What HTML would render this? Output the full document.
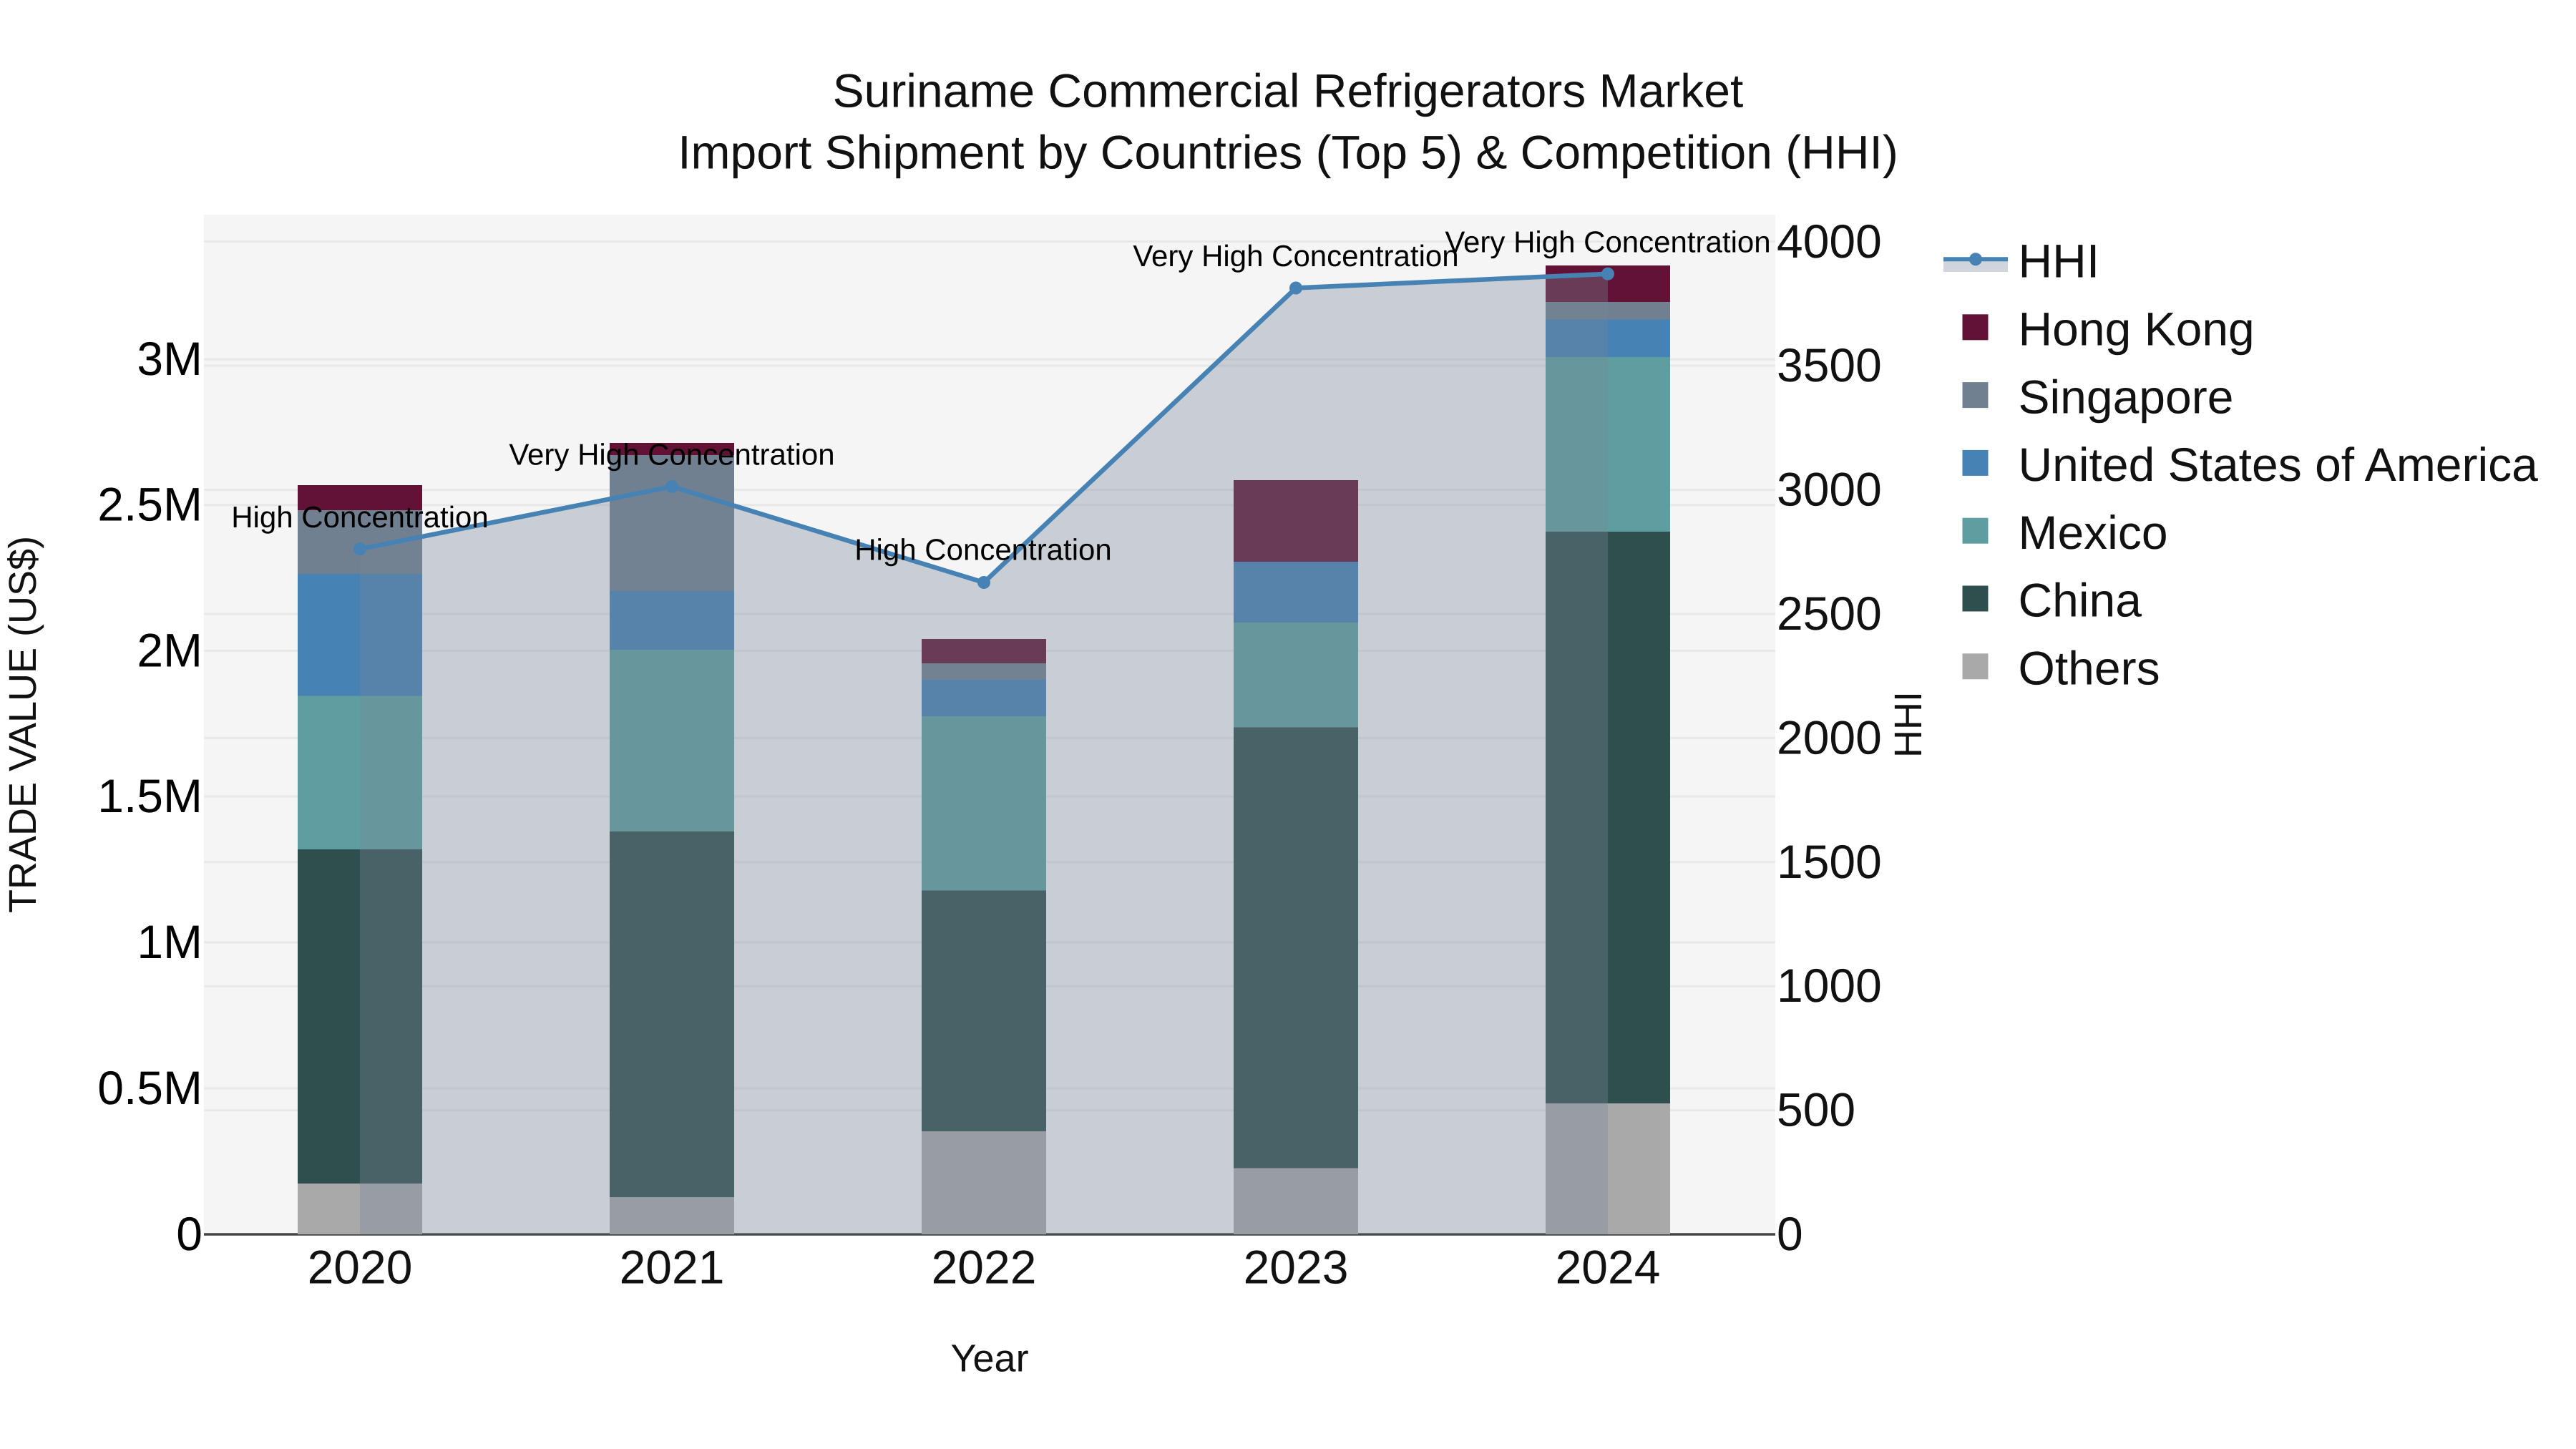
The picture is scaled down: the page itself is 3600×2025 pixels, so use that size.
<!DOCTYPE html>
<html lang="en">
<head>
<meta charset="utf-8">
<title>Suriname Commercial Refrigerators Market</title>
<style>
html,body{margin:0;padding:0;background:#fff;width:3600px;height:2025px;overflow:hidden}
svg{display:block}
text{font-family:"Liberation Sans",Arial,sans-serif;text-rendering:geometricPrecision}
.t{font-size:66px;fill:#111}
.k{font-size:66px;fill:#000;text-anchor:end}
.x{font-size:66px;fill:#111;text-anchor:middle}
.a{font-size:42px;fill:#000;text-anchor:middle}
.l{font-size:66px;fill:#111}
.h{font-size:54px;fill:#111;text-anchor:middle}
</style>
</head>
<body>
<svg xmlns="http://www.w3.org/2000/svg" width="3600" height="2025" viewBox="0 0 3600 2025">
<rect width="3600" height="2025" fill="#fff"/>
<rect x="285" y="300" width="2196" height="1425" fill="#f5f5f5"/>
<!-- gridlines -->
<g stroke="#e8e8e8" stroke-width="3" fill="none">
<path d="M285 1521H2481M285 1317H2481M285 1113H2481M285 909.5H2481M285 705.7H2481M285 502.2H2481"/>
<path d="M285 1551.6H2481M285 1378.2H2481M285 1204.8H2481M285 1031.4H2481M285 858H2481M285 684.5H2481M285 511H2481M285 337.5H2481"/>
</g>
<path d="M285 1725H2481" stroke="#444" stroke-width="3.5" fill="none"/>
<!-- bars -->
<g shape-rendering="crispEdges">
<!-- 2020 -->
<rect x="416" y="1654" width="174" height="71" fill="#a9a9a9"/>
<rect x="416" y="1187" width="174" height="467" fill="#2f4f4f"/>
<rect x="416" y="972.5" width="174" height="214.5" fill="#5f9ea0"/>
<rect x="416" y="802" width="174" height="170.5" fill="#4682b4"/>
<rect x="416" y="713" width="174" height="89" fill="#708090"/>
<rect x="416" y="678" width="174" height="35" fill="#621335"/>
<!-- 2021 -->
<rect x="852" y="1673" width="174" height="52" fill="#a9a9a9"/>
<rect x="852" y="1162" width="174" height="511" fill="#2f4f4f"/>
<rect x="852" y="908" width="174" height="254" fill="#5f9ea0"/>
<rect x="852" y="826" width="174" height="82" fill="#4682b4"/>
<rect x="852" y="636" width="174" height="190" fill="#708090"/>
<rect x="852" y="619" width="174" height="17" fill="#621335"/>
<!-- 2022 -->
<rect x="1288" y="1581" width="174" height="144" fill="#a9a9a9"/>
<rect x="1288" y="1244.5" width="174" height="336.5" fill="#2f4f4f"/>
<rect x="1288" y="1001" width="174" height="243.5" fill="#5f9ea0"/>
<rect x="1288" y="950" width="174" height="51" fill="#4682b4"/>
<rect x="1288" y="927" width="174" height="23" fill="#708090"/>
<rect x="1288" y="893" width="174" height="34" fill="#621335"/>
<!-- 2023 -->
<rect x="1724" y="1632.5" width="174" height="92.5" fill="#a9a9a9"/>
<rect x="1724" y="1016.5" width="174" height="616" fill="#2f4f4f"/>
<rect x="1724" y="870" width="174" height="146.5" fill="#5f9ea0"/>
<rect x="1724" y="785" width="174" height="85" fill="#4682b4"/>
<rect x="1724" y="671" width="174" height="114" fill="#621335"/>
<!-- 2024 -->
<rect x="2160" y="1542" width="174" height="183" fill="#a9a9a9"/>
<rect x="2160" y="743" width="174" height="799" fill="#2f4f4f"/>
<rect x="2160" y="499" width="174" height="244" fill="#5f9ea0"/>
<rect x="2160" y="446.7" width="174" height="52.3" fill="#4682b4"/>
<rect x="2160" y="422" width="174" height="24.7" fill="#708090"/>
<rect x="2160" y="371" width="174" height="51" fill="#621335"/>
</g>
<!-- HHI area + line -->
<path d="M503 767.3L939 680L1375 814L1811 402.5L2247 382.7V1725H503Z" fill="rgba(119,136,153,.35)"/>
<path d="M503 767.3L939 680L1375 814L1811 402.5L2247 382.7" fill="none" stroke="#4682b4" stroke-width="6.5" stroke-linejoin="round"/>
<g fill="#4682b4">
<circle cx="503" cy="767.3" r="9"/><circle cx="939" cy="680" r="9"/><circle cx="1375" cy="814" r="9"/><circle cx="1811" cy="402.5" r="9"/><circle cx="2247" cy="382.7" r="9"/>
</g>
<!-- annotations -->
<text class="a" x="503" y="737">High Concentration</text>
<text class="a" x="939" y="649.5">Very High Concentration</text>
<text class="a" x="1374" y="782.5">High Concentration</text>
<text class="a" x="1811" y="372">Very High Concentration</text>
<text class="a" x="2247" y="352.5">Very High Concentration</text>
<!-- title -->
<text x="1800" y="149.5" text-anchor="middle" style="font-size:66px;fill:#111">Suriname Commercial Refrigerators Market</text>
<text x="1800" y="235.5" text-anchor="middle" style="font-size:66px;fill:#111">Import Shipment by Countries (Top 5) &amp; Competition (HHI)</text>
<!-- left ticks -->
<text class="k" x="283" y="1747">0</text>
<text class="k" x="283" y="1543">0.5M</text>
<text class="k" x="283" y="1339">1M</text>
<text class="k" x="283" y="1135">1.5M</text>
<text class="k" x="283" y="931.5">2M</text>
<text class="k" x="283" y="727.5">2.5M</text>
<text class="k" x="283" y="524">3M</text>
<!-- right ticks -->
<text class="t" x="2483" y="1747">0</text>
<text class="t" x="2483" y="1573.6">500</text>
<text class="t" x="2483" y="1400.2">1000</text>
<text class="t" x="2483" y="1226.8">1500</text>
<text class="t" x="2483" y="1053.4">2000</text>
<text class="t" x="2483" y="880">2500</text>
<text class="t" x="2483" y="706.6">3000</text>
<text class="t" x="2483" y="533.2">3500</text>
<text class="t" x="2483" y="359.8">4000</text>
<!-- x ticks -->
<text class="x" x="503" y="1793.5">2020</text>
<text class="x" x="939" y="1793.5">2021</text>
<text class="x" x="1375" y="1793.5">2022</text>
<text class="x" x="1811" y="1793.5">2023</text>
<text class="x" x="2247" y="1793.5">2024</text>
<!-- axis titles -->
<text class="h" x="1383" y="1916.5">Year</text>
<text class="h" transform="translate(50,1012.5) rotate(-90)">TRADE VALUE (US$)</text>
<text class="h" transform="translate(2685,1012.5) rotate(-90)">HHI</text>
<!-- legend -->
<rect x="2716" y="362" width="90" height="18" fill="rgba(119,136,153,.35)"/>
<path d="M2716 362.3H2806" stroke="#4682b4" stroke-width="6" fill="none"/>
<circle cx="2761" cy="362.3" r="9" fill="#4682b4"/>
<rect x="2742.5" y="439.3" width="36" height="36" fill="#621335"/>
<rect x="2742.5" y="534.1" width="36" height="36" fill="#708090"/>
<rect x="2742.5" y="628.9" width="36" height="36" fill="#4682b4"/>
<rect x="2742.5" y="723.7" width="36" height="36" fill="#5f9ea0"/>
<rect x="2742.5" y="818.5" width="36" height="36" fill="#2f4f4f"/>
<rect x="2742.5" y="913.3" width="36" height="36" fill="#a9a9a9"/>
<text class="l" x="2820.5" y="387.7">HHI</text>
<text class="l" x="2820.5" y="482.5">Hong Kong</text>
<text class="l" x="2820.5" y="577.3">Singapore</text>
<text class="l" x="2820.5" y="672.1">United States of America</text>
<text class="l" x="2820.5" y="766.9">Mexico</text>
<text class="l" x="2820.5" y="861.7">China</text>
<text class="l" x="2820.5" y="956.5">Others</text>
</svg>
</body>
</html>
